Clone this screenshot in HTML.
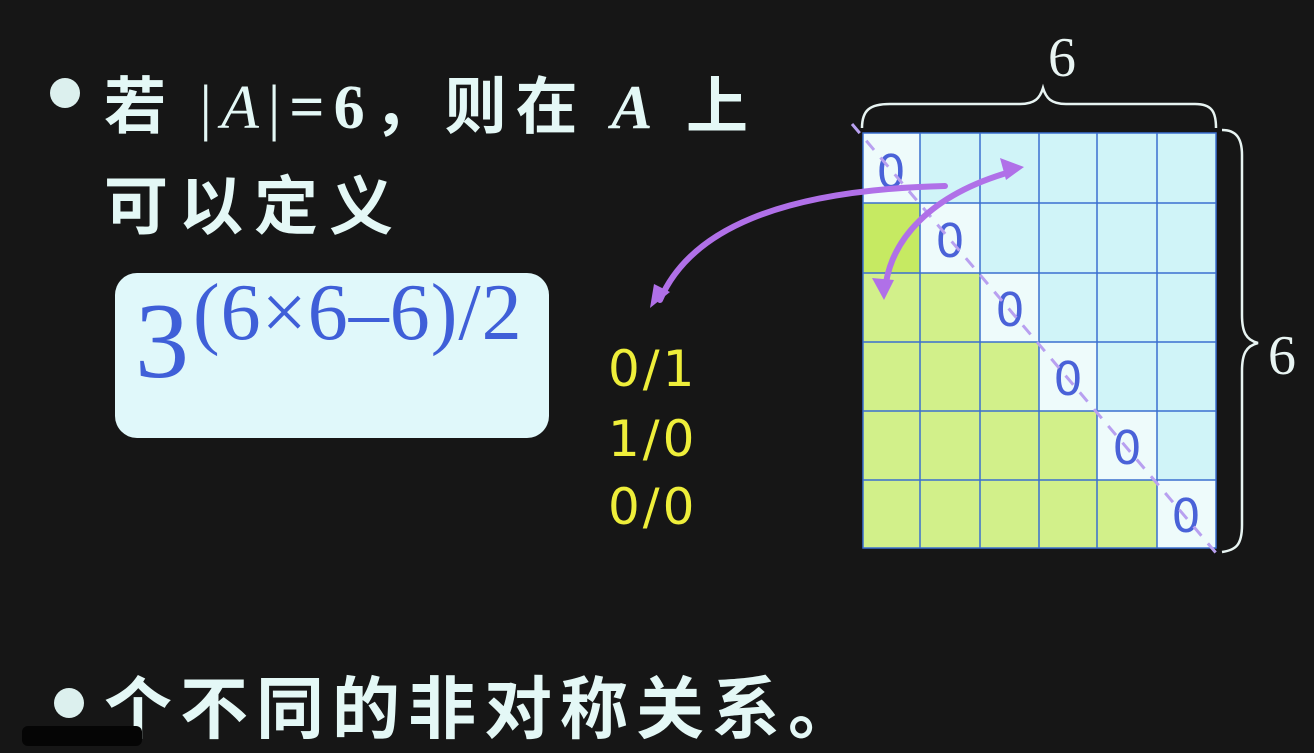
<!DOCTYPE html>
<html><head><meta charset="utf-8"><style>
body{margin:0;width:1314px;height:742px;background:#161616;overflow:hidden;position:relative;font-family:"Liberation Sans","Noto Sans CJK SC",sans-serif;}
.t{position:absolute;color:#e4f8f6;font-weight:bold;white-space:nowrap;}
.dot{position:absolute;width:30px;height:30px;border-radius:50%;background:#dcf0ee;}
.y{position:absolute;color:#eeee3a;font-family:"DejaVu Sans","Liberation Sans",sans-serif;font-size:50px;left:608px;letter-spacing:3px;}
</style></head><body>
<div class="dot" style="left:50px;top:78px"></div>
<div class="t" style="left:104px;top:56px;font-size:62px;letter-spacing:9px;font-family:'Liberation Serif','Noto Sans CJK SC',serif;">若 <span style="font-weight:normal">|<i>A</i>|</span>=6<span style="font-family:'Noto Sans CJK SC'">，则在</span> <i>A</i> <span style="font-family:'Noto Sans CJK SC'">上</span></div>
<div class="t" style="left:104px;top:156px;font-size:64px;letter-spacing:11px;">可以定义</div>
<div style="position:absolute;left:115px;top:273px;width:434px;height:165px;background:#e0f8fa;border-radius:22px;"></div>
<div style="position:absolute;left:135px;top:282px;color:#3f5fd8;font-family:'Liberation Serif',serif;font-size:108px;line-height:120px;">3</div>
<div style="position:absolute;left:193px;top:270px;color:#3f5fd8;font-family:'Liberation Serif',serif;font-size:80px;line-height:86px;white-space:nowrap;letter-spacing:1px;">(6×6–6)/2</div>
<div class="y" style="top:340px">0/1</div>
<div class="y" style="top:410px">1/0</div>
<div class="y" style="top:478px">0/0</div>
<svg style="position:absolute;left:0;top:0" width="1314" height="742">
<rect x="863" y="133" width="353" height="415" fill="#d0f4f8"/>
<g fill="#d2f08a">
<rect x="863" y="203" width="57" height="345"/><rect x="920" y="273" width="60" height="275"/><rect x="980" y="342" width="59" height="206"/><rect x="1039" y="411" width="58" height="137"/><rect x="1097" y="480" width="60" height="68"/>
</g>
<rect x="863" y="203" width="57" height="70" fill="#c6ea62"/>
<g fill="#eefbfb">
<rect x="863" y="133" width="57" height="70"/><rect x="920" y="203" width="60" height="70"/><rect x="980" y="273" width="59" height="69"/><rect x="1039" y="342" width="58" height="69"/><rect x="1097" y="411" width="60" height="69"/><rect x="1157" y="480" width="59" height="68"/>
</g>
<g stroke="#3a6fd0" stroke-width="1.5" fill="none">
<rect x="863" y="133" width="353" height="415"/>
<path d="M920 133V548M980 133V548M1039 133V548M1097 133V548M1157 133V548M863 203H1216M863 273H1216M863 342H1216M863 411H1216M863 480H1216"/>
</g>
<g fill="#4a62d8" font-family="DejaVu Sans,sans-serif" font-size="46" text-anchor="middle">
<text x="891" y="188">0</text><text x="950" y="257">0</text><text x="1010" y="326">0</text><text x="1068" y="395">0</text><text x="1127" y="464">0</text><text x="1186" y="532">0</text>
</g>
<line x1="852" y1="124" x2="1222" y2="560" stroke="#b8a0f0" stroke-width="3" stroke-dasharray="12 10"/>
<g stroke="#b070e8" stroke-width="6" fill="none" stroke-linecap="round">
<path d="M660 300 C690 230 780 190 945 186"/>
<path d="M885 290 C890 240 930 195 1010 172"/>
</g>
<g fill="#b070e8">
<path d="M650 308 L654 284 L670 292Z"/>
<path d="M1024 167 L1000 158 L1006 180Z"/>
<path d="M884 300 L872 278 L894 280Z"/>
</g>
<g stroke="#e8f4f2" stroke-width="2.5" fill="none">
<path d="M862 128 C862 110 870 104 890 104 L1020 104 C1035 104 1040 98 1043 88 C1046 98 1051 104 1066 104 L1195 104 C1212 104 1216 112 1216 128"/>
<path d="M1222 130 C1236 130 1242 138 1242 155 L1242 315 C1242 332 1246 340 1258 343 C1246 346 1242 354 1242 371 L1242 525 C1242 545 1236 550 1222 552"/>
</g>
<g fill="#e8f4f2" font-family="Liberation Serif,serif" font-size="56">
<text x="1048" y="76">6</text><text x="1268" y="374">6</text>
</g>
</svg>
<div class="dot" style="left:54px;top:688px;width:30px;height:30px"></div>
<div class="t" style="left:104px;top:654px;font-size:68px;letter-spacing:8px;font-weight:bold;">个不同的非对称关系。</div>
<div style="position:absolute;left:22px;top:726px;width:120px;height:20px;background:#050505;border-radius:6px"></div>
</body></html>
